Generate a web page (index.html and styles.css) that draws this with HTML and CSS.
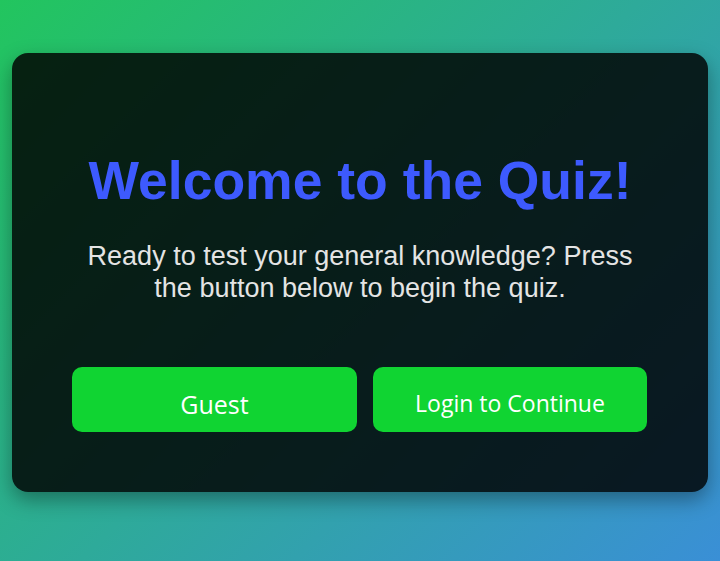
FILE: index.html
```html
<!DOCTYPE html>
<html lang="en">
<head>
<meta charset="utf-8">
<title>Quiz</title>
<link rel="stylesheet" href="styles.css">
</head>
<body>
<main class="page">
  <section class="card">
    <h1 class="title">Welcome to the Quiz!</h1>
    <p class="intro">Ready to test your general knowledge? Press the button below to begin the quiz.</p>
    <div class="actions">
      <button class="btn btn-guest">Guest</button>
      <button class="btn btn-login">Login to Continue</button>
    </div>
  </section>
</main>
</body>
</html>
```

FILE: styles.css
```css
html, body {
  margin: 0;
  padding: 0;
  height: 100%;
}
body {
  background: linear-gradient(135deg, #22c55e 0%, #3a8fd6 100%);
  font-family: "Liberation Sans", Arial, sans-serif;
  overflow: hidden;
}
.page {
  box-sizing: border-box;
  height: 561px;
  padding: 53px 12px 0;
}
.card {
  box-sizing: border-box;
  height: 439px;
  background: rgba(0, 0, 0, 0.83);
  border-radius: 16px;
  box-shadow: 0 8px 20px rgba(0, 0, 0, 0.35);
  padding: 98px 60px 0 60px;
  display: flex;
  flex-direction: column;
  align-items: center;
}
.title {
  margin: 0;
  color: #3d5afe;
  font-size: 53.5px;
  font-weight: bold;
  line-height: 60px;
  text-align: center;
  white-space: nowrap;
}
.intro {
  margin: 29px 0 0;
  color: #e4e4e4;
  font-size: 27px;
  line-height: 32px;
  text-align: center;
}
.actions {
  margin-top: 63px;
  display: flex;
  gap: 16px;
  width: 575px;
  align-self: flex-start;
}
.btn {
  height: 65px;
  border: none;
  border-radius: 10px;
  background: #10d432;
  color: #fff;
  font-family: "Open Sans", "Noto Sans", sans-serif;
  cursor: pointer;
}
.btn-guest {
  flex: 0 0 285px;
  font-size: 25px;
  padding-top: 10px;
}
.btn-login {
  flex: 1;
  font-size: 23px;
  padding-top: 8px;
}
```
